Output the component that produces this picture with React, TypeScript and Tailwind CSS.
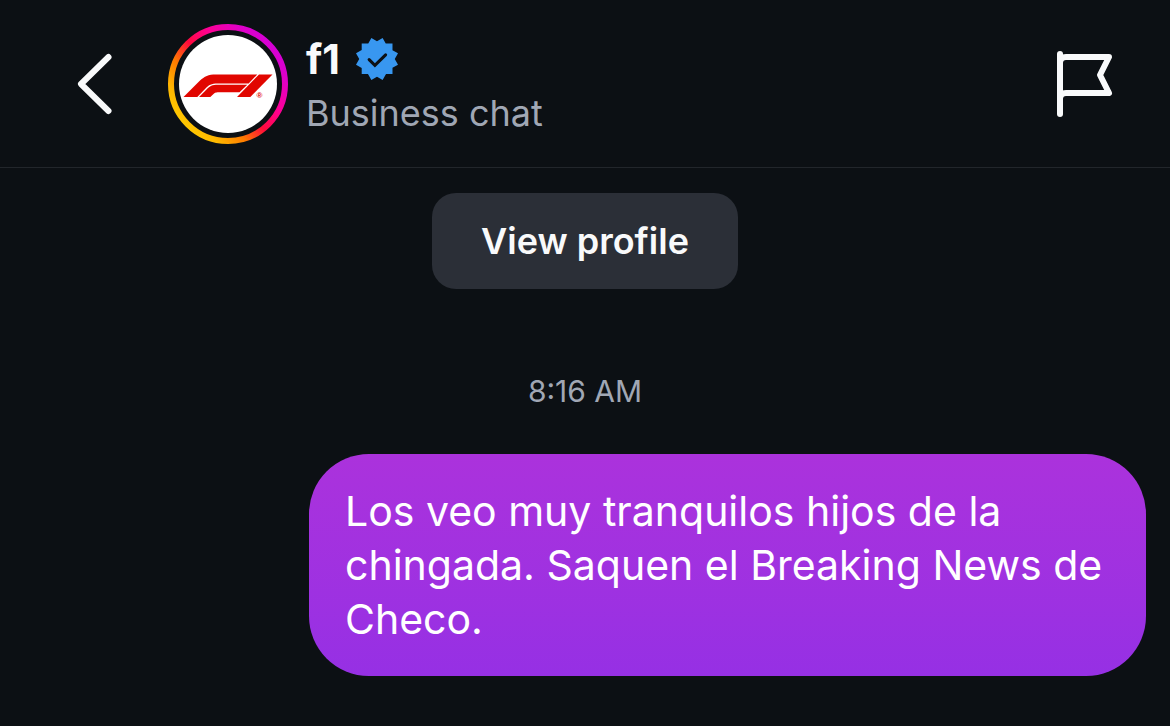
import type { SVGProps } from "react"

const chat = {
  username: "f1",
  subtitle: "Business chat",
  time: "8:16 AM",
  message:
    "Los veo muy tranquilos hijos de la chingada. Saquen el Breaking News de Checo.",
}

function BackIcon(props: SVGProps<SVGSVGElement>) {
  return (
    <svg viewBox="0 0 48 72" fill="none" aria-hidden="true" {...props}>
      <path
        d="M36.5 9 9 36l27.5 27"
        stroke="currentColor"
        strokeWidth="6"
        strokeLinecap="round"
        strokeLinejoin="round"
      />
    </svg>
  )
}

function FlagIcon(props: SVGProps<SVGSVGElement>) {
  return (
    <svg viewBox="0 0 64 72" fill="none" aria-hidden="true" {...props}>
      <g
        stroke="currentColor"
        strokeWidth="6"
        strokeLinecap="round"
        strokeLinejoin="round"
      >
        <path d="M6 6v60" />
        <path d="M6 15C6 11 8 9 12 9H55L46 27L55 45H12C8 45 6 47 6 51" />
      </g>
    </svg>
  )
}

function VerifiedBadge(props: SVGProps<SVGSVGElement>) {
  return (
    <svg viewBox="0 0 40 40" role="img" aria-label="Verified" {...props}>
      <path
        fill="#3897f0"
        d="M19.998 3.094 14.638 0l-2.972 5.15H5.432v6.354L0 14.64 3.094 20 0 25.359l5.432 3.137v5.905h5.975L14.638 40l5.36-3.094L25.358 40l3.232-5.6h6.162v-6.01L40 25.359 36.905 20 40 14.641l-5.248-3.03v-6.46h-6.419L25.358 0l-5.36 3.094Z"
      />
      <path
        d="M12.5 20.6 18 26l10.2-10"
        fill="none"
        stroke="#0c1014"
        strokeWidth="2.9"
        strokeLinecap="round"
        strokeLinejoin="miter"
      />
    </svg>
  )
}

function Avatar(props: SVGProps<SVGSVGElement>) {
  return (
    <svg viewBox="0 0 120 120" role="img" aria-label="f1 story" {...props}>
      <defs>
        <linearGradient id="ring" x1="0.1" y1="0.85" x2="0.9" y2="0.15">
          <stop offset="0" stopColor="#ffc800" />
          <stop offset="0.12" stopColor="#ffb800" />
          <stop offset="0.3" stopColor="#ff7a00" />
          <stop offset="0.48" stopColor="#ff0a3c" />
          <stop offset="0.66" stopColor="#ff0090" />
          <stop offset="0.88" stopColor="#e000c8" />
          <stop offset="1" stopColor="#d300d6" />
        </linearGradient>
      </defs>
      <circle cx="60" cy="60" r="57" fill="none" stroke="url(#ring)" strokeWidth="6" />
      <circle cx="60" cy="60" r="49" fill="#fff" />
      <g fill="#e10600">
        <path d="M15.500 73 31.500 57C37 52 40 50.500 48 50.500H89.300L80.600 59.400H50C43 59.400 41 60.800 37.500 64.500L29.300 73Z" />
        <path d="M31 73 38.500 65.500C42 62 44 60.700 50 60.700H79.300L71.500 68.300H52C48 68.300 47.300 68.500 45.500 70L42.300 73Z" />
        <path d="M69 73 91 50.500H104.500L82.300 73Z" />
        <text
          x="88.5"
          y="74"
          fontSize="8"
          fontWeight="700"
          fontFamily="Liberation Sans, sans-serif"
        >
          ®
        </text>
      </g>
    </svg>
  )
}

function ChatHeader() {
  return (
    <header className="flex items-center border-b border-[#22262b] pt-6 pr-[52px] pb-[23px] pl-[72px]">
      <button type="button" aria-label="Back" className="shrink-0">
        <BackIcon className="h-[72px] w-12" />
      </button>

      <Avatar className="ml-12 size-[120px] shrink-0" />

      <div className="ml-[18px] min-w-0 flex-1 pt-1">
        <div className="flex items-center gap-4">
          <h1 className="text-[41px] leading-[54px] font-bold">{chat.username}</h1>
          <VerifiedBadge className="size-[42px]" />
        </div>
        <p className="text-[36px] leading-[54px] text-[#a0a7b4]">{chat.subtitle}</p>
      </div>

      <button type="button" aria-label="Report" className="shrink-0">
        <FlagIcon className="h-[72px] w-16" />
      </button>
    </header>
  )
}

export default function App() {
  return (
    <div className="min-h-screen bg-[#0c1014] font-['Inter','Liberation_Sans',sans-serif] text-[#f9fafb]">
      <ChatHeader />

      <main className="flex flex-col px-6 pt-[25px]">
        <button
          type="button"
          className="self-center rounded-3xl bg-[#2b2f37] px-[49px] py-6 text-[36px] leading-[48px] font-semibold"
        >
          View profile
        </button>

        <time className="mt-20 self-center text-[30px] leading-[45px] text-[#a0a7b4]">
          {chat.time}
        </time>

        <p className="mt-10 max-w-[837px] self-end rounded-[60px] bg-linear-to-b from-[#ab32dc] to-[#9630e4] px-9 py-[30px] text-[41px] leading-[54px] text-white">
          {chat.message}
        </p>
      </main>
    </div>
  )
}
